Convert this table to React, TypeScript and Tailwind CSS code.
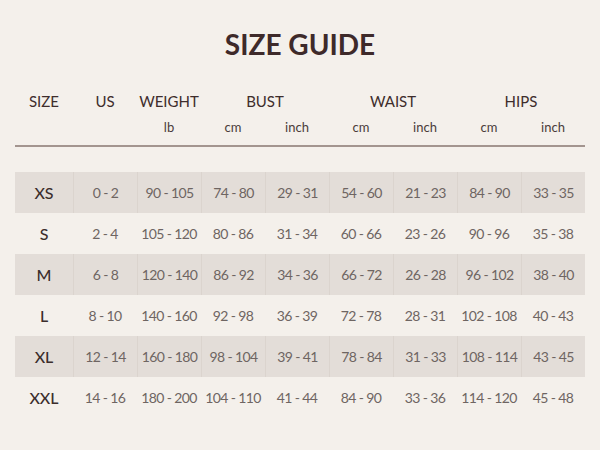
const rows = [
  ["XS", "0 - 2", "90 - 105", "74 - 80", "29 - 31", "54 - 60", "21 - 23", "84 - 90", "33 - 35"],
  ["S", "2 - 4", "105 - 120", "80 - 86", "31 - 34", "60 - 66", "23 - 26", "90 - 96", "35 - 38"],
  ["M", "6 - 8", "120 - 140", "86 - 92", "34 - 36", "66 - 72", "26 - 28", "96 - 102", "38 - 40"],
  ["L", "8 - 10", "140 - 160", "92 - 98", "36 - 39", "72 - 78", "28 - 31", "102 - 108", "40 - 43"],
  ["XL", "12 - 14", "160 - 180", "98 - 104", "39 - 41", "78 - 84", "31 - 33", "108 - 114", "43 - 45"],
  ["XXL", "14 - 16", "180 - 200", "104 - 110", "41 - 44", "84 - 90", "33 - 36", "114 - 120", "45 - 48"],
];

const cols = "grid grid-cols-[58px_repeat(8,64px)]";

export default function App() {
  return (
    <div
      className="h-[450px] w-[600px] bg-[#f4f0eb] px-[15px] pt-[27px]"
      style={{ fontFamily: "Lato, 'Open Sans', sans-serif" }}
    >
      <h1 className="text-center text-[28px] font-bold leading-[34px] text-[#3e2a2a]">
        SIZE GUIDE
      </h1>

      <div className={`${cols} mt-[30px] text-center text-[15px] leading-[20px] text-[#3e2d2c]`}>
        <div>SIZE</div>
        <div>US</div>
        <div>WEIGHT</div>
        <div className="col-span-2">BUST</div>
        <div className="col-span-2">WAIST</div>
        <div className="col-span-2">HIPS</div>
      </div>
      <div className={`${cols} mt-[7px] text-center text-[13px] leading-[18px] text-[#4a3c3a]`}>
        <div />
        <div />
        <div>lb</div>
        <div>cm</div>
        <div>inch</div>
        <div>cm</div>
        <div>inch</div>
        <div>cm</div>
        <div>inch</div>
      </div>
      <div className="mt-[9px] h-[2px] bg-[#a3958f]" />

      <div className="mt-[25px]">
        {rows.map((row, i) => (
          <div
            key={row[0]}
            className={`${cols} h-[41px] items-stretch text-center ${i % 2 === 0 ? "bg-[#e3ddd8]" : ""}`}
          >
            {row.map((cell, j) => (
              <div
                key={j}
                className={`flex items-center justify-center ${
                  j === 0
                    ? "text-[16px] font-medium text-[#3b2d2c]"
                    : "text-[14px] tracking-[-0.6px] text-[#6e6562]"
                } ${j > 0 && i % 2 === 0 ? "border-l border-[#dbd4ce]" : ""}`}
              >
                {cell}
              </div>
            ))}
          </div>
        ))}
      </div>
    </div>
  );
}
